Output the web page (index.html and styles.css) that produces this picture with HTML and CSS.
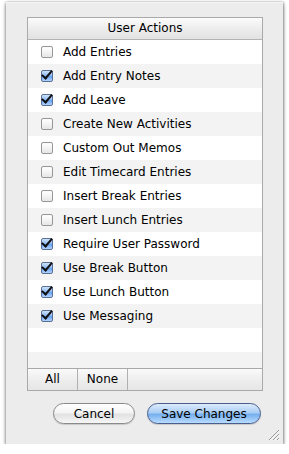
FILE: index.html
```html
<!DOCTYPE html>
<html>
<head>
<meta charset="utf-8">
<link rel="stylesheet" href="styles.css">
</head>
<body>
<div class="sheet">
  <div class="table">
    <div class="header">User Actions</div>
    <div class="list">
      <div class="row"><span class="cb"></span><span class="label">Add Entries</span></div>
      <div class="row"><span class="cb on"></span><span class="label">Add Entry Notes</span></div>
      <div class="row"><span class="cb on"></span><span class="label">Add Leave</span></div>
      <div class="row"><span class="cb"></span><span class="label">Create New Activities</span></div>
      <div class="row"><span class="cb"></span><span class="label">Custom Out Memos</span></div>
      <div class="row"><span class="cb"></span><span class="label">Edit Timecard Entries</span></div>
      <div class="row"><span class="cb"></span><span class="label">Insert Break Entries</span></div>
      <div class="row"><span class="cb"></span><span class="label">Insert Lunch Entries</span></div>
      <div class="row"><span class="cb on"></span><span class="label">Require User Password</span></div>
      <div class="row"><span class="cb on"></span><span class="label">Use Break Button</span></div>
      <div class="row"><span class="cb on"></span><span class="label">Use Lunch Button</span></div>
      <div class="row"><span class="cb on"></span><span class="label">Use Messaging</span></div>
      <div class="row"></div>
      <div class="row"></div>
    </div>
    <div class="bar">
      <div class="seg">All</div>
      <div class="seg">None</div>
    </div>
  </div>
  <div class="buttons">
    <button class="btn">Cancel</button>
    <button class="btn primary">Save Changes</button>
  </div>
  <svg class="grip" width="12" height="12" viewBox="0 0 12 12">
    <path d="M1 11 L11 1 M5 11 L11 5 M9 11 L11 9" stroke="#9a9a9a" stroke-width="1"/>
    <path d="M2 11.5 L11.5 2 M6 11.5 L11.5 6 M10 11.5 L11.5 10" stroke="#ffffff" stroke-width="0.8"/>
  </svg>
</div>
</body>
</html>
```
FILE: styles.css
```css
html, body {
  margin: 0;
  padding: 0;
  background: #ffffff;
}
body {
  font-family: "DejaVu Sans", "Liberation Sans", sans-serif;
  font-size: 12px;
  color: #000;
}
.sheet {
  position: relative;
  margin: 2px 0 0 6px;
  width: 277px;
  height: 442px;
  box-sizing: border-box;
  background: #ececec;
  border-top: 1px solid #f6f6f6;
  box-shadow: 0 2px 4px rgba(0,0,0,0.45), 1px 0 2px rgba(0,0,0,0.25), -1px 0 2px rgba(0,0,0,0.15);
  padding: 14px 0 0 21px;
}
.table {
  width: 236px;
  box-sizing: border-box;
  border: 1px solid #a9a9a9;
  background: #fff;
}
.header {
  height: 21px;
  line-height: 21px;
  text-align: center;
  border-bottom: 1px solid #b4b4b4;
  background: linear-gradient(#fbfbfb, #ededed 50%, #e2e2e2);
  font-size: 12px;
}
.list {
  height: 328px;
  overflow: hidden;
}
.row {
  height: 24px;
  display: flex;
  align-items: center;
  padding-left: 13px;
}
.row:nth-child(odd) { background: #ffffff; }
.row:nth-child(even) { background: #f3f3f3; }
.cb {
  width: 10px;
  height: 10px;
  border: 1px solid #979797;
  border-radius: 2px;
  background: linear-gradient(#ffffff, #f4f4f4 50%, #e6e6e6);
  position: relative;
  flex: none;
}
.cb.on {
  border-color: #5a6f96;
  background: linear-gradient(#cfe2f8, #8bb8f2 50%, #6aa1ec 55%, #b0d5ff);
}
.cb.on::after {
  content: "";
  position: absolute;
  left: 2px;
  top: -3px;
  width: 4px;
  height: 9px;
  border-right: 2px solid #111;
  border-bottom: 2px solid #111;
  transform: rotate(40deg);
}
.label {
  margin-left: 10px;
  white-space: nowrap;
}
.bar {
  height: 21px;
  border-top: 1px solid #a9a9a9;
  display: flex;
  background: linear-gradient(#fafafa, #eeeeee 50%, #e6e6e6);
}
.seg {
  width: 49px;
  text-align: center;
  line-height: 21px;
  border-right: 1px solid #b0b0b0;
  font-size: 12px;
}
.buttons {
  display: flex;
  gap: 12px;
  margin: 12px 0 0 26px;
}
.btn {
  height: 21px;
  padding: 0;
  border: 1px solid #8a8a8a;
  border-radius: 11px;
  font-family: "DejaVu Sans", "Liberation Sans", sans-serif;
  font-size: 12px;
  color: #000;
  background: linear-gradient(#ffffff, #f4f4f4 45%, #e2e2e2 55%, #f6f6f6);
  box-shadow: 0 1px 1px rgba(0,0,0,0.15);
  width: 82px;
}
.btn.primary {
  width: 114px;
  border-color: #4a5d8c;
  background: linear-gradient(#dcebfb, #a9cdf5 45%, #77b0ef 55%, #b9dcff);
}
.grip {
  position: absolute;
  right: 3px;
  bottom: 3px;
}
```
